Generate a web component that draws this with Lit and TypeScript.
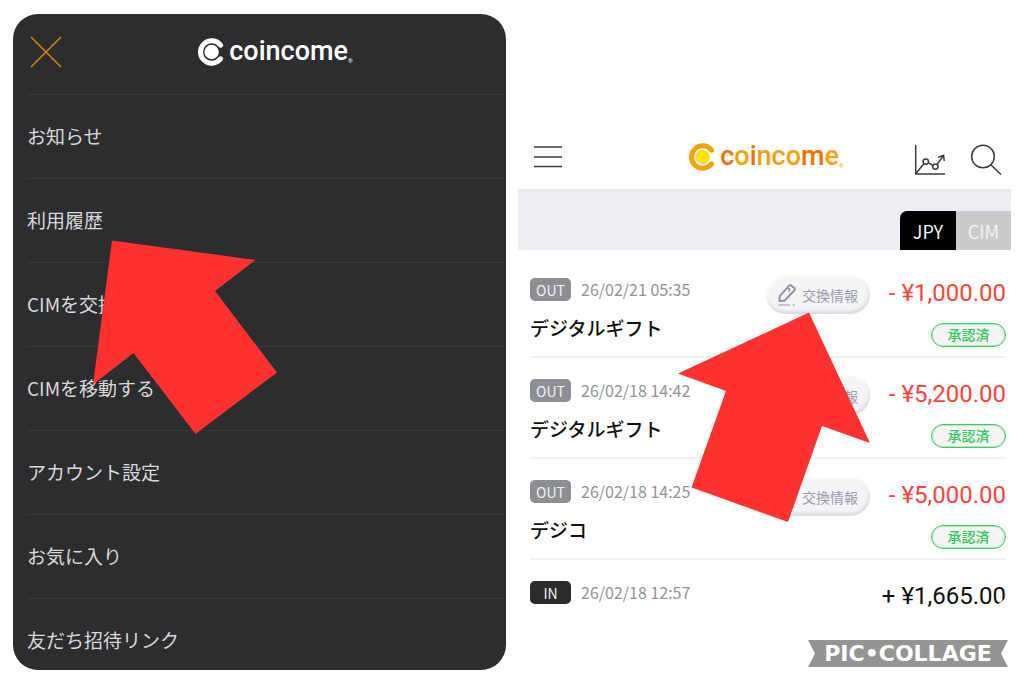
import { LitElement, html, css, svg, nothing } from "lit";
import { customElement, property, state } from "lit/decorators.js";
import { classMap } from "lit/directives/class-map.js";

interface Entry {
  kind: "OUT" | "IN";
  date: string;
  title?: string;
  amount: string;
  status?: string;
}

const MENU = [
  "お知らせ",
  "利用履歴",
  "CIMを交換する",
  "CIMを移動する",
  "アカウント設定",
  "お気に入り",
  "友だち招待リンク",
];

const ENTRIES: Entry[] = [
  { kind: "OUT", date: "26/02/21 05:35", title: "デジタルギフト", amount: "- ¥1,000.00", status: "承認済" },
  { kind: "OUT", date: "26/02/18 14:42", title: "デジタルギフト", amount: "- ¥5,200.00", status: "承認済" },
  { kind: "OUT", date: "26/02/18 14:25", title: "デジコ", amount: "- ¥5,000.00", status: "承認済" },
  { kind: "IN", date: "26/02/18 12:57", amount: "+ ¥1,665.00" },
];

@customElement("coin-logo")
export class CoinLogo extends LitElement {
  @property({ type: Boolean, reflect: true }) mono = false;

  static styles = css`
    :host {
      --ring: #f6a00c;
      --core: #ffe200;
      --deep: #ee7203;
      --soft: #f6a00c;
      display: inline-flex;
      align-items: center;
      gap: 5px;
    }
    :host([mono]) {
      --ring: #fff;
      --core: #fff;
      --deep: #fff;
      --soft: #fff;
    }
    .mark {
      display: block;
      width: 26px;
      height: 28px;
    }
    .ring {
      fill: none;
      stroke: var(--ring);
      stroke-width: 5;
      stroke-linecap: round;
    }
    .core {
      fill: var(--core);
    }
    .word {
      font: 500 27px/32px Roboto, sans-serif;
      color: var(--soft);
      margin-bottom: 2px;
    }
    .deep {
      color: var(--deep);
    }
    .reg {
      font: 6px/8px Roboto, sans-serif;
      color: var(--soft);
      align-self: flex-end;
      margin: 0 0 4px -5px;
    }
  `;

  render() {
    return html`
      <svg class="mark" viewBox="0 0 26 28" aria-hidden="true">
        <path class="ring" d="M22.6 7.2A11.2 11.2 0 1 0 22.6 20.8" />
        <circle class="core" cx="13.6" cy="14" r="7.2" />
      </svg>
      <span class="word"><span class="deep">c</span>o<span class="deep">i</span>nco<span class="deep">m</span>e</span>
      <span class="reg">®</span>
    `;
  }
}

@customElement("side-menu")
export class SideMenu extends LitElement {
  static styles = css`
    :host {
      display: block;
      background: #2d2d2f;
      border-radius: 25px;
      overflow: hidden;
      color: #d8d8dc;
    }
    .head {
      display: flex;
      align-items: center;
      height: 80px;
      padding: 0 17px;
      box-sizing: border-box;
    }
    .close {
      width: 32px;
      height: 32px;
      padding: 0;
      border: 0;
      background: none;
      margin-bottom: 5px;
    }
    .close svg {
      display: block;
      fill: none;
      stroke: #d9860f;
      stroke-width: 1.5;
    }
    .brand {
      flex: 1;
      display: flex;
      justify-content: center;
      margin-bottom: 4px;
    }
    ul {
      list-style: none;
      margin: 0;
      padding: 0 0 0 14px;
    }
    li {
      border-top: 1px solid #3a3a3d;
      height: 83px;
    }
    a {
      display: flex;
      align-items: center;
      height: 100%;
      padding-bottom: 2px;
      box-sizing: border-box;
      color: inherit;
      text-decoration: none;
      font-size: 19px;
      line-height: 28px;
    }
  `;

  render() {
    return html`
      <div class="head">
        <button class="close" aria-label="閉じる">
          <svg width="32" height="32" viewBox="0 0 32 32"><path d="M1 1L31 31M31 1L1 31" /></svg>
        </button>
        <div class="brand"><coin-logo mono></coin-logo></div>
      </div>
      <ul>
        ${MENU.map((label) => html`<li><a href="#">${label}</a></li>`)}
      </ul>
    `;
  }
}

@customElement("history-row")
export class HistoryRow extends LitElement {
  @property({ attribute: false }) entry!: Entry;

  static styles = css`
    :host {
      display: flex;
      align-items: flex-start;
      padding-top: 18px;
    }
    .info {
      flex: 1;
    }
    .when {
      display: flex;
      align-items: center;
      gap: 10px;
      height: 28px;
      color: #929297;
      font-size: 16px;
      line-height: 28px;
    }
    .kind {
      width: 41px;
      height: 23px;
      padding-top: 1px;
      box-sizing: border-box;
      border-radius: 5px;
      background: #8e8e95;
      color: #f0f0f2;
      font-size: 14px;
      line-height: 22px;
      text-align: center;
    }
    .kind.in {
      background: #2b2b2d;
    }
    .title {
      margin-top: 11px;
      color: #111;
      font-size: 19px;
      font-weight: 500;
      line-height: 28px;
    }
    .detail {
      display: flex;
      align-items: center;
      gap: 5px;
      height: 39px;
      padding: 0 12px 0 11px;
      border: 0;
      border-radius: 20px;
      background: #f4f4f7;
      box-shadow: inset -1px -3px 3px #dcdce0, inset 2px 2px 3px #fbfbfd;
      color: #9c9bae;
      font: inherit;
      font-size: 14px;
      line-height: 20px;
    }
    .detail svg {
      display: block;
      fill: none;
      stroke: #9391a9;
      stroke-width: 2;
      stroke-linejoin: round;
    }
    .figures {
      width: 136px;
      padding-top: 2px;
      box-sizing: border-box;
      display: flex;
      flex-direction: column;
      align-items: flex-end;
      gap: 14px;
    }
    .amount {
      color: #fb453c;
      font: 24px/32px Roboto, sans-serif;
      white-space: nowrap;
    }
    .amount.in {
      color: #111;
    }
    .status {
      width: 75px;
      height: 24px;
      box-sizing: border-box;
      border: 1px solid #3fcb62;
      outline: 1px solid #3fcb6255;
      outline-offset: -2px;
      border-radius: 12px;
      background: #f5f5f8;
      color: #36c65a;
      font-size: 14px;
      font-weight: 500;
      line-height: 21px;
      text-align: center;
    }
  `;

  render() {
    const e = this.entry;
    const income = e.kind === "IN";
    return html`
      <div class="info">
        <div class="when">
          <span class=${classMap({ kind: true, in: income })}>${e.kind}</span>
          <time>${e.date}</time>
        </div>
        ${e.title ? html`<div class="title">${e.title}</div>` : nothing}
      </div>
      ${income
        ? nothing
        : html`<button class="detail">
            <svg width="20" height="24" viewBox="0 0 20 24" aria-hidden="true">
              <path d="M12.2 2.6Q13.2 1.8 14.2 2.6L17.4 5.2Q18.4 6.2 17.5 7.2L8 17.2Q7.4 17.8 6.6 17.8L2.4 18L2.6 14Q2.6 13.2 3.2 12.6Z" />
              <path d="M10.4 4.8L12.6 6.2L12 8.8" stroke-width="1.6" />
              <path d="M1.5 22H13M15.5 22H18" stroke-width="1" />
            </svg>
            交換情報
          </button>`}
      <div class="figures">
        <span class=${classMap({ amount: true, in: income })}>${e.amount}</span>
        ${e.status ? html`<span class="status">${e.status}</span>` : nothing}
      </div>
    `;
  }
}

@customElement("history-screen")
export class HistoryScreen extends LitElement {
  @state() private currency = "JPY";

  static styles = css`
    :host {
      display: block;
      background: #fff;
      border-radius: 25px;
      overflow: hidden;
    }
    .head {
      display: flex;
      align-items: center;
      padding: 48px 9px 0 15px;
      height: 112px;
      box-sizing: border-box;
    }
    .icon {
      padding: 0;
      border: 0;
      background: none;
    }
    .icon svg {
      display: block;
      fill: none;
      stroke: #3c3c3c;
      stroke-width: 1.5;
    }
    .brand {
      flex: 1;
      display: flex;
      justify-content: center;
      padding-left: 56px;
    }
    .tools {
      display: flex;
      gap: 24px;
      padding-top: 6px;
    }
    .band {
      display: flex;
      justify-content: flex-end;
      align-items: flex-end;
      height: 61px;
      background: linear-gradient(#e6e6ea, #eeedf3 5px);
    }
    .tab {
      width: 55px;
      height: 39px;
      padding: 0;
      border: 0;
      background: #cbcbcb;
      color: #f4f4f4;
      font: inherit;
      font-size: 18px;
      line-height: 26px;
    }
    .tab:first-child {
      width: 56px;
      border-top-left-radius: 7px;
    }
    .tab.on {
      background: #000;
    }
    ul {
      list-style: none;
      margin: 0;
      padding: 7px 5px 0 12px;
    }
    li {
      height: 101px;
      box-sizing: border-box;
      border-bottom: 2px solid #f1f1f4;
    }
    li:last-child {
      height: 47px;
      border-bottom: 0;
    }
  `;

  render() {
    return html`
      <div class="head">
        <button class="icon" aria-label="メニュー">
          <svg width="30" height="24" viewBox="0 0 30 24"><path d="M1 2H29M1 12H29M1 21.5H29" /></svg>
        </button>
        <div class="brand"><coin-logo></coin-logo></div>
        <div class="tools">
          <button class="icon" aria-label="グラフ">
            <svg width="32" height="32" viewBox="0 0 32 32">
              <path d="M1.7 1V30H31M2 29.5L10 19.5M14.2 18.6L18.6 21.4M22.8 20.8L29.4 11.6M24 13.4L29.6 11.2L30.2 17" />
              <circle cx="11.8" cy="17.6" r="2.7" />
              <circle cx="21.4" cy="22.6" r="2.7" />
            </svg>
          </button>
          <button class="icon" aria-label="検索">
            <svg width="32" height="32" viewBox="0 0 32 32">
              <circle cx="13" cy="12.5" r="11.3" />
              <path d="M20.8 20.7L31 30.5" />
            </svg>
          </button>
        </div>
      </div>
      <div class="band">
        ${["JPY", "CIM"].map(
          (c) => html`<button
            class=${classMap({ tab: true, on: this.currency === c })}
            @click=${() => (this.currency = c)}
          >${c}</button>`
        )}
      </div>
      <ul>
        ${ENTRIES.map((e) => html`<li><history-row .entry=${e}></history-row></li>`)}
      </ul>
    `;
  }
}

@customElement("app-root")
export class AppRoot extends LitElement {
  static styles = css`
    :host {
      display: block;
      position: relative;
      background: #fff;
      font-family: "Noto Sans CJK JP", sans-serif;
    }
    .stage {
      display: grid;
      grid-template-columns: 1fr 1fr;
      grid-template-rows: minmax(0, 1fr);
      gap: 12px;
      height: 100vh;
      box-sizing: border-box;
      padding: 14px 13px 13px;
    }
    .cell {
      position: relative;
      display: grid;
      grid-template-rows: minmax(0, 1fr);
    }
    .cell.center {
      align-self: center;
    }
    .arrow {
      position: absolute;
      fill: #ff3131;
      pointer-events: none;
    }
    .to-menu {
      left: 80px;
      top: 226px;
    }
    .to-detail {
      right: 141px;
      top: 235px;
    }
    .stamp {
      position: absolute;
      right: 16px;
      bottom: 16px;
      width: 200px;
      height: 27px;
      padding-top: 1px;
      box-sizing: border-box;
      background: #949494;
      clip-path: polygon(0 0, 100% 0, 96.5% 50%, 100% 100%, 0 100%, 3.5% 50%);
      color: #fff;
      font: bold 22px/26px "DejaVu Sans", sans-serif;
      text-align: center;
    }
  `;

  render() {
    return html`
      <main class="stage">
        <div class="cell">
          <side-menu></side-menu>
          <svg class="arrow to-menu" width="184" height="194" viewBox="0 0 184 194" aria-hidden="true">
            ${svg`<polygon points="19,0.5 162.5,20 122,51 184,132.5 102.5,194 40.5,113 0,144.5" />`}
          </svg>
        </div>
        <div class="cell center">
          <history-screen></history-screen>
          <svg class="arrow to-detail" width="192" height="210" viewBox="0 0 192 210" aria-hidden="true">
            ${svg`<polygon points="131,0.5 192,131 144,114 110,210 13.5,175.5 48,79 0,61.5" />`}
          </svg>
        </div>
      </main>
      <div class="stamp">PIC•COLLAGE</div>
    `;
  }
}
